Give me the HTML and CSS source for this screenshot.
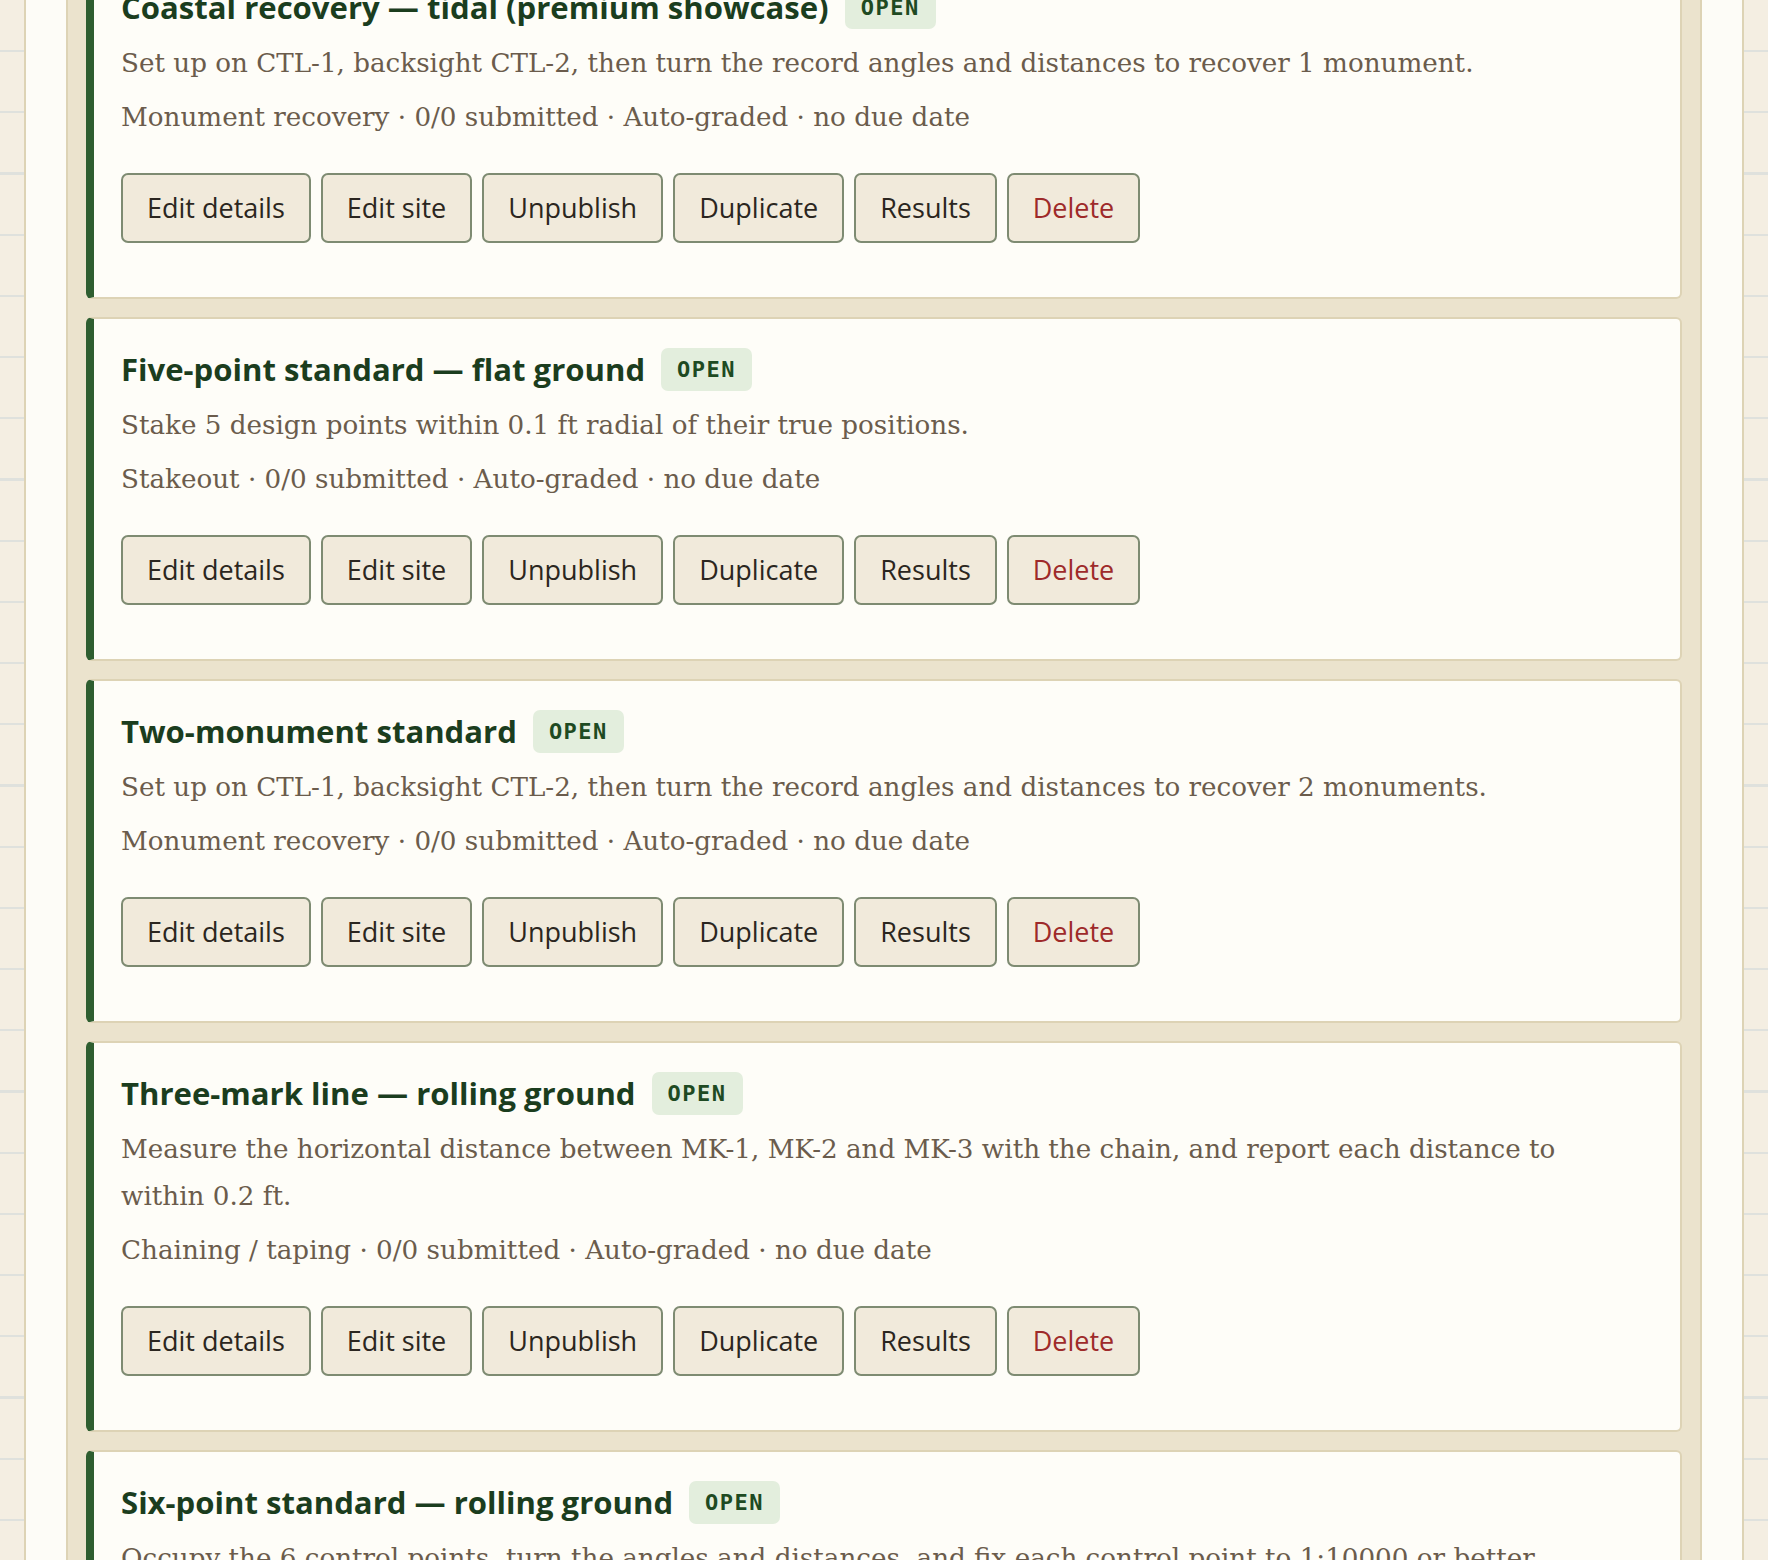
FILE: index.html
```html
<!DOCTYPE html>
<html lang="en">
  <head>
    <meta charset="UTF-8" />
    <meta name="viewport" content="width=device-width, initial-scale=1.0" />
    <title>Assignments</title>
    <link rel="stylesheet" href="styles.css">
  </head>

  <body>
    <div class="sheet">
      <div class="panel">
        <div class="card">
          <h3 class="card-title">Coastal recovery — tidal (premium showcase) <span class="badge">OPEN</span></h3>
          <p class="desc">Set up on CTL-1, backsight CTL-2, then turn the record angles and distances to recover 1 monument.</p>
          <p class="meta">Monument recovery · 0/0 submitted · Auto-graded · no due date</p>
          <div class="actions">
            <button>Edit details</button>
            <button>Edit site</button>
            <button>Unpublish</button>
            <button>Duplicate</button>
            <button>Results</button>
            <button class="danger">Delete</button>
          </div>
        </div>

        <div class="card">
          <h3 class="card-title">Five-point standard — flat ground <span class="badge">OPEN</span></h3>
          <p class="desc">Stake 5 design points within 0.1 ft radial of their true positions.</p>
          <p class="meta">Stakeout · 0/0 submitted · Auto-graded · no due date</p>
          <div class="actions">
            <button>Edit details</button>
            <button>Edit site</button>
            <button>Unpublish</button>
            <button>Duplicate</button>
            <button>Results</button>
            <button class="danger">Delete</button>
          </div>
        </div>

        <div class="card">
          <h3 class="card-title">Two-monument standard <span class="badge">OPEN</span></h3>
          <p class="desc">Set up on CTL-1, backsight CTL-2, then turn the record angles and distances to recover 2 monuments.</p>
          <p class="meta">Monument recovery · 0/0 submitted · Auto-graded · no due date</p>
          <div class="actions">
            <button>Edit details</button>
            <button>Edit site</button>
            <button>Unpublish</button>
            <button>Duplicate</button>
            <button>Results</button>
            <button class="danger">Delete</button>
          </div>
        </div>

        <div class="card">
          <h3 class="card-title">Three-mark line — rolling ground <span class="badge">OPEN</span></h3>
          <p class="desc">Measure the horizontal distance between MK-1, MK-2 and MK-3 with the chain, and report each distance to within 0.2 ft.</p>
          <p class="meta">Chaining / taping · 0/0 submitted · Auto-graded · no due date</p>
          <div class="actions">
            <button>Edit details</button>
            <button>Edit site</button>
            <button>Unpublish</button>
            <button>Duplicate</button>
            <button>Results</button>
            <button class="danger">Delete</button>
          </div>
        </div>

        <div class="card">
          <h3 class="card-title">Six-point standard — rolling ground <span class="badge">OPEN</span></h3>
          <p class="desc">Occupy the 6 control points, turn the angles and distances, and fix each control point to 1:10000 or better against the record coordinates.</p>
          <p class="meta">Traverse · 0/0 submitted · Auto-graded · no due date</p>
          <div class="actions">
            <button>Edit details</button>
            <button>Edit site</button>
            <button>Unpublish</button>
            <button>Duplicate</button>
            <button>Results</button>
            <button class="danger">Delete</button>
          </div>
        </div>
      </div>
    </div>
  </body>
</html>
```

FILE: styles.css
```css
* {
  box-sizing: border-box;
  margin: 0;
  padding: 0;
}

body {
  background-color: #f4eee2;
  background-image: repeating-linear-gradient(
    to bottom,
    transparent 0,
    transparent 59px,
    #dfe1dd 59px,
    #dfe1dd 61.2px
  );
  background-position: 0 -9px;
  font-family: "DejaVu Serif", serif;
}

.sheet {
  margin: -65px 24px 0;
  padding: 0 40px 40px;
  background-color: #fdfcf7;
  border-left: 2px solid #ddd3b5;
  border-right: 2px solid #ddd3b5;
}

.panel {
  display: flex;
  flex-direction: column;
  gap: 18px;
  padding: 18px;
  background-color: #ebe3cd;
  border: 2px solid #ddd3b5;
}

.card {
  padding: 28px 40px 54px 27px;
  background-color: #fefdf8;
  border: 2px solid #ddd3b5;
  border-left: 8px solid #2e5e30;
  border-radius: 6px;
}

.card-title {
  display: flex;
  align-items: center;
  gap: 16px;
  height: 44px;
  margin-bottom: 11px;
  font-family: "Open Sans", sans-serif;
  font-size: 31.1px;
  font-weight: 700;
  color: #1b3d1e;
}

.badge {
  padding: 8px 16px;
  border-radius: 7px;
  background-color: #e3eedd;
  color: #1e4a22;
  font-family: "DejaVu Sans Mono", monospace;
  font-size: 22px;
  font-weight: 700;
  line-height: 27px;
  letter-spacing: 1.5px;
}

.desc,
.meta {
  font-size: 26.2px;
  line-height: 47px;
  color: #6b5c4c;
}

.meta {
  margin-top: 7px;
}

.actions {
  display: flex;
  gap: 10px;
  margin-top: 32px;
}

button {
  padding: 13px 24px;
  border: 2px solid #7e8b72;
  border-radius: 7px;
  background-color: #f1eadb;
  color: #2b2620;
  font-family: "Open Sans", sans-serif;
  font-size: 27px;
  font-weight: 500;
  line-height: 40px;
}

button.danger {
  color: #9e2a2a;
}
```
